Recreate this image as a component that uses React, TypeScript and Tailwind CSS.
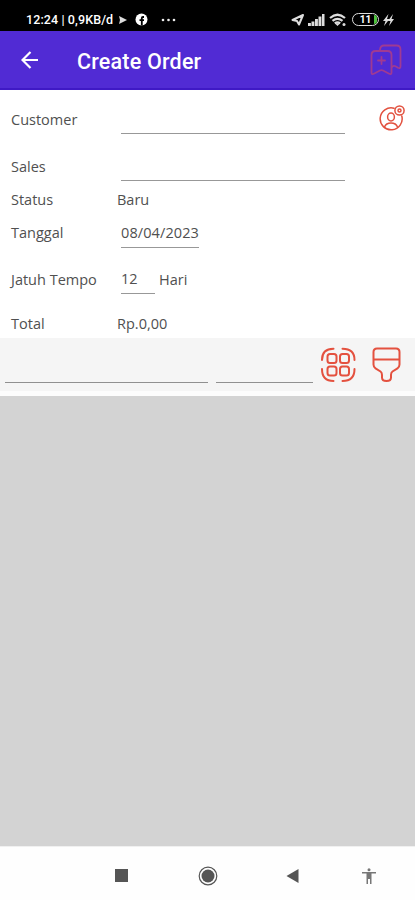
import React from 'react';

const BookmarksIcon: React.FC = () => (
    <svg className="w-[32px] h-[32px]" viewBox="0 0 32 32" fill="none" stroke="#a03a92" strokeWidth="1.8" strokeLinejoin="round" strokeLinecap="round">
        <path d="M1.5 28.5V11Q1.5 7 5.5 7H17.5Q21.500 7 21.500 11V28.500Q21.500 31 19.200 29.800L13 26.500Q11.500 25.700 10 26.500L3.800 29.800Q1.500 31 1.500 28.500Z" />
        <path d="M10 6.500V5.500Q10.500 1.500 14 1.500H26.500Q30.500 1.500 30.500 5.500V22Q30.500 25 28 23.800L25.500 22.300Q23.500 21.300 22 23" />
        <path d="M11.500 13v7M8 16.500h7" />
    </svg>
);

const CustomerIcon: React.FC = () => (
    <svg className="w-[26px] h-[26px]" viewBox="0 0 26 26" fill="none" stroke="#e2513f" strokeWidth="1.5" strokeLinecap="round">
        <path d="M15 3.200A11 11 0 1 0 22.800 11" />
        <ellipse cx="12" cy="12" rx="3.400" ry="3.900" />
        <path d="M5.500 22Q7 18 12 18T18.500 22" />
        <circle cx="20.500" cy="5.500" r="4.600" />
        <circle cx="20.500" cy="5.500" r="1.500" />
    </svg>
);

const ScanIcon: React.FC = () => (
    <svg className="w-[36px] h-[36px]" viewBox="0 0 36 36" fill="none" stroke="#e4513f" strokeWidth="2" strokeLinecap="round">
        <path d="M2 13Q2 1.800 13.500 1.800M22.500 1.800Q34.500 1.800 34.500 13M34.500 22Q34.500 34 22.500 34M13.500 34Q2 34 2 22" />
        <rect x="7.500" y="7" width="9" height="9" rx="2.500" />
        <rect x="20" y="7" width="9" height="9" rx="2.500" />
        <rect x="7.500" y="19.500" width="9" height="9" rx="2.500" />
        <rect x="20" y="19.500" width="9" height="9" rx="2.500" />
    </svg>
);

const BrushIcon: React.FC = () => (
    <svg className="w-[29px] h-[36px]" viewBox="0 0 29 36" fill="none" stroke="#e4513f" strokeWidth="2" strokeLinejoin="round">
        <path d="M1.500 5Q1.500 1.500 5 1.500H24Q27.500 1.500 27.500 5V17.500Q27.500 20 25.500 21.300L20.500 24.500Q19 25.500 19 28V30.500Q19 34 14.500 34T10 30.500V28Q10 25.500 8.500 24.500L3.500 21.300Q1.500 20 1.500 17.500Z" />
        <path d="M1.500 12.500H27.500" />
    </svg>
);

const StatusBar: React.FC = () => (
    <div className="h-[31px] bg-black flex items-center pt-[8px] pl-[26px] text-white">
        <span className="w-[88px] shrink-0 whitespace-nowrap font-['Roboto',sans-serif] font-medium text-[12.5px] leading-4 tracking-[0.1px]">12:24 | 0,9KB/d</span>
        <svg className="ml-[5px] w-[8px] h-[8px]" viewBox="0 0 8 8" fill="#ddd"><path d="M0 0L8 4L0 8L1 4Z" /></svg>
        <svg className="ml-[8px] w-[13px] h-[13px]" viewBox="0 0 13 13">
            <circle cx="6.500" cy="6.500" r="6" fill="#fff" />
            <path d="M9 4H8Q6.800 4 6.800 5.200V12.500M4.500 7.200H9" stroke="#000" strokeWidth="1.800" fill="none" />
        </svg>
        <svg className="ml-[13px] w-[15px] h-[4px]" viewBox="0 0 15 4" fill="#eee">
            <circle cx="2" cy="2" r="1.300" /><circle cx="7.500" cy="2" r="1.300" /><circle cx="13" cy="2" r="1.300" />
        </svg>
        <div className="ml-auto mr-[21px] flex items-center">
            <svg className="w-[13px] h-[12px]" viewBox="0 0 13 12" fill="none" stroke="#ddd" strokeWidth="2" strokeLinejoin="round"><path d="M12 1L8 10.500L6 7L1.500 6Z" /></svg>
            <svg className="ml-[4px] w-[17px] h-[12px]" viewBox="0 0 17 12" fill="#ddd"><path d="M0 9h2.900v3H0zM3.500 7.500H6.400V12H3.500zM7 5h2.900v7H7zM10.500 2.500H13.400V12h-2.900zM14 0h2.500v12H14z" /></svg>
            <svg className="ml-[4px] w-[18px] h-[14px]" viewBox="0 0 18 14" fill="none" stroke="#ddd" strokeWidth="2.200">
                <path d="M1 5Q8.500-1.500 16 5M3.500 7.800Q8.500 3.800 13.500 7.800M5.800 10.300Q8.500 8.300 11.200 10.300" />
                <path d="M7.500 11L8.500 12L9.500 11Z" fill="#ddd" strokeWidth="1.400" />
                <circle cx="15" cy="11.500" r="1.500" fill="#ddd" stroke="none" />
            </svg>
            <div className="relative ml-[5px] w-[27px] h-[13px] rounded-full border-[1.5px] border-[#ddd] flex items-center justify-center font-['Roboto',sans-serif] font-bold text-[10px] leading-none">
                11
                <span className="absolute right-[1px] top-[1px] w-[3px] h-[9px] rounded-r-full bg-[#4fc33e]" />
            </div>
            <svg className="ml-[4px] w-[11px] h-[12px]" viewBox="0 0 11 12" fill="#ddd"><path d="M5.500 0L0 7H2.500L1 12L6.500 5H4ZM10 0L5 7H7.500L6 12L11 5H8.500Z" /></svg>
        </div>
    </div>
);

const Header: React.FC = () => (
    <header className="h-[59px] bg-[#512bd4] border-b-2 border-[#3f19c5] flex items-center pl-[21px] pr-[13px]">
        <svg className="w-[18px] h-[18px]" viewBox="0 0 18 18" fill="none" stroke="#fff" strokeWidth="2.200"><path d="M17 9H2M9.500 1L1.500 9L9.500 17" /></svg>
        <h1 className="ml-[38px] pt-[4px] font-['Roboto',sans-serif] font-medium text-[21.500px] leading-none tracking-[0.2px] text-white">Create Order</h1>
        <div className="ml-auto"><BookmarksIcon /></div>
    </header>
);

const Label: React.FC<{ children: React.ReactNode }> = ({ children }) => (
    <span className="w-[106px] shrink-0">{children}</span>
);

const OrderForm: React.FC = () => (
    <section className="h-[248px] bg-white pl-[11px] pt-[6px] text-[#505050]">
        <div className="h-[47px] flex items-center">
            <Label>Customer</Label>
            <div className="ml-[4px] mt-[-2px] w-[224px] h-[30px] border-b border-[#989898]" />
            <div className="ml-[34px] mt-[-3px]"><CustomerIcon /></div>
        </div>
        <div className="h-[47px] flex items-center">
            <Label>Sales</Label>
            <div className="ml-[4px] mt-[-2px] w-[224px] h-[30px] border-b border-[#989898]" />
        </div>
        <div className="h-[20px] flex items-center">
            <Label>Status</Label>
            <span>Baru</span>
        </div>
        <div className="h-[46px] flex items-center">
            <Label>Tanggal</Label>
            <div className="ml-[4px] w-[78px] h-[30px] border-b border-[#989898] flex items-center whitespace-nowrap tracking-[0.1px]">08/04/2023</div>
        </div>
        <div className="h-[47px] flex items-center">
            <Label>Jatuh Tempo</Label>
            <div className="ml-[4px] w-[34px] h-[29px] border-b border-[#989898] flex items-center">12</div>
            <span className="ml-[4px]">Hari</span>
        </div>
        <div className="h-[35px] pt-[7px] flex items-center">
            <Label>Total</Label>
            <span>Rp.0,00</span>
        </div>
    </section>
);

const ItemBar: React.FC = () => (
    <div className="h-[58px] bg-[#f5f5f5] border-b-5 border-[#fcfcfc] flex pl-[5px] pt-[9px]">
        <div className="w-[203px] h-[36px] shrink-0 border-b border-[#909090]" />
        <div className="ml-[8px] w-[97px] h-[36px] shrink-0 border-b border-[#909090]" />
        <div className="ml-[7px] shrink-0"><ScanIcon /></div>
        <div className="ml-[15.5px] shrink-0"><BrushIcon /></div>
    </div>
);

const NavBar: React.FC = () => (
    <nav className="h-[54px] bg-[#fefefe] border-t border-[#f0f0f0] flex items-center pl-[115px] pt-[4px] text-[#555]">
        <div className="w-[13px] h-[13px] bg-[#555]" />
        <svg className="ml-[70px] w-[20px] h-[20px]" viewBox="0 0 20 20" fill="currentColor">
            <circle cx="10" cy="10" r="8.800" fill="none" stroke="currentColor" strokeWidth="1.200" />
            <circle cx="10" cy="10" r="6.500" />
        </svg>
        <svg className="ml-[68px] w-[13px] h-[14px]" viewBox="0 0 13 14" fill="currentColor"><path d="M0.500 7L12.500 0V14Z" /></svg>
        <svg className="ml-[63px] w-[14px] h-[16px]" viewBox="0 0 14 16" fill="#777">
            <circle cx="7" cy="1.700" r="1.500" />
            <path d="M0 4H14V5.500H9.500V16H8V11H6V16H4.500V5.500H0Z" />
        </svg>
    </nav>
);

const App: React.FC = () => {
    return (
        <div className="w-[415px] h-[900px] overflow-hidden flex flex-col bg-white font-['Open_Sans',sans-serif] text-[14.5px] leading-[18px]">
            <StatusBar />
            <Header />
            <OrderForm />
            <ItemBar />
            <main className="flex-1 bg-[#d3d3d3]" />
            <NavBar />
        </div>
    );
};

export default App;
